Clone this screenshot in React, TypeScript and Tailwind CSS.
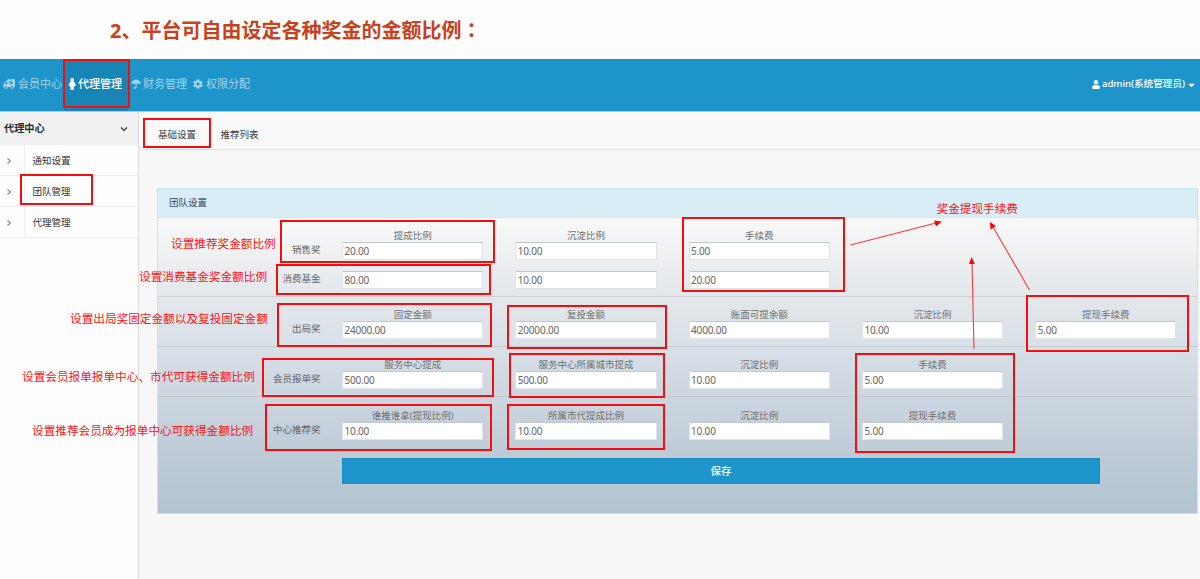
import React from "react";
import { FaAmbulance, FaCaretDown, FaCog, FaUser } from "react-icons/fa";

type Field = { label?: string; value: string };

function FieldRow({ name, fields, className }: { name: string; fields: Field[]; className: string }) {
  return (
    <div className={`flex items-end ${className}`}>
      <div className="mr-[21.5px] flex h-[17.5px] w-[162.5px] shrink-0 items-start justify-end text-[9.5px] leading-[14px] text-[#666]">
        {name}
      </div>
      <div className="flex gap-[32px]">
        {fields.map((f, i) => (
          <div key={i} className="w-[141.3px]">
            {f.label && (
              <div className="h-[13.5px] text-center text-[9.5px] leading-[14px] whitespace-nowrap text-[#707070]">{f.label}</div>
            )}
            <div className="flex h-[18px] items-center border border-[#e0e4e8] border-t-[#c3c8cc] bg-white pl-[1.5px] text-[10px] tracking-[-0.2px] text-[#666]">
              {f.value}
            </div>
          </div>
        ))}
      </div>
    </div>
  );
}

const boxes = [
  "left-[63px] top-[59px] w-[67px] h-[49px]",
  "left-[143px] top-[118px] w-[68px] h-[30px]",
  "left-[20px] top-[174px] w-[73px] h-[31px]",
  "left-[280px] top-[220px] w-[215px] h-[43px]",
  "left-[276px] top-[264px] w-[215px] h-[31px]",
  "left-[682px] top-[217px] w-[163px] h-[75px]",
  "left-[277px] top-[303px] w-[215px] h-[44px]",
  "left-[507px] top-[305px] w-[160px] h-[44px]",
  "left-[1026px] top-[295px] w-[163px] h-[57px]",
  "left-[262px] top-[358px] w-[232px] h-[39px]",
  "left-[509px] top-[353px] w-[156px] h-[45px]",
  "left-[855px] top-[353px] w-[160px] h-[100px]",
  "left-[265px] top-[404px] w-[227px] h-[47px]",
  "left-[507px] top-[404px] w-[158px] h-[46px]",
];

const notes = [
  { text: "设置推荐奖金额比例", pos: "left-[171px] top-[235px]" },
  { text: "设置消费基金奖金额比例", pos: "left-[139px] top-[268px]" },
  { text: "设置出局奖固定金额以及复投固定金额", pos: "left-[70px] top-[310px]" },
  { text: "设置会员报单报单中心、市代可获得金额比例", pos: "left-[22px] top-[368px]" },
  { text: "设置推荐会员成为报单中心可获得金额比例", pos: "left-[32px] top-[422px]" },
  { text: "奖金提现手续费", pos: "left-[936.5px] top-[200px]" },
];

function Chevron({ className, d }: { className: string; d: string }) {
  return (
    <svg className={className} viewBox="0 0 8 8" fill="none" stroke="currentColor" strokeWidth="1.1">
      <path d={d} />
    </svg>
  );
}

export default function App() {
  return (
    <div className="relative flex h-[579px] w-[1200px] flex-col overflow-hidden bg-[#f7f7f7] font-['Noto_Sans','Noto_Sans_CJK_SC',sans-serif] text-[9.5px]">
      <h1 className="h-[59px] shrink-0 bg-[#fdfdfd] pl-[110px] text-[20px] leading-[59px] font-bold text-[#c6421c]">
        2、平台可自由设定各种奖金的金额比例<span className="font-['Noto_Sans_CJK_TC',sans-serif]" lang="zh-TW">：</span>
      </h1>

      <nav className="flex h-[53px] shrink-0 border-b border-[#9fcde4] bg-[#1d94ca] text-[11px] leading-[16px] text-[#a5d4ea]">
        <a className="flex w-[64px] items-center pb-[2px] pl-[3px] whitespace-nowrap">
          <FaAmbulance className="mr-[3px] h-[12px] w-[12px] shrink-0 -scale-x-100" />
          会员中心
        </a>
        <a className="flex w-[64px] items-center bg-[#1785b6] pb-[2px] pl-[4px] font-medium whitespace-nowrap text-white">
          <svg className="mr-[1.5px] h-[12px] w-[8.5px] shrink-0" viewBox="0 0 8.500 12" fill="currentColor">
            <circle cx="4.200" cy="1.900" r="1.800" />
            <path d="M2.300 3.500 H6.100 L7.900 7.200 L7 8.200 L6.300 7.900 L5.900 9 V11.700 H2.500 V9 L2.100 7.900 L1.400 8.200 L0.500 7.200 Z" />
          </svg>
          代理管理
        </a>
        <a className="flex w-[62px] items-center pb-[2px] pl-[3px] whitespace-nowrap">
          <svg className="mr-[2px] h-[10px] w-[10px] shrink-0" viewBox="0 0 10 10">
            <path fill="currentColor" d="M5 0.800 C7.600 0.800 9.600 2.700 10 5 C9.200 4.300 8.200 4.300 7.500 5 C6.700 4.200 5.700 4.200 5 4.900 C4.300 4.200 3.300 4.200 2.500 5 C1.800 4.300 0.800 4.300 0 5 C0.400 2.700 2.400 0.800 5 0.800 Z" />
            <path fill="none" stroke="currentColor" strokeWidth="1.1" d="M5 0 V8.300 C5 9.700 2.900 9.700 2.900 8.200" />
          </svg>
          财务管理
        </a>
        <a className="flex w-[70px] items-center pb-[2px] pl-[3px] whitespace-nowrap">
          <FaCog className="mr-[3px] h-[10px] w-[10px] shrink-0" />
          权限分配
        </a>
        <div className="ml-auto flex items-center pr-[5px] pb-[2px] text-[9.6px] font-medium text-white">
          <FaUser className="mr-[2px] h-[9px] w-[8px]" />
          admin(系统管理员)
          <FaCaretDown className="mt-[1px] ml-[3px] h-[10px] w-[7px]" />
        </div>
      </nav>

      <div className="flex min-h-0 flex-1">
        <aside className="w-[139px] shrink-0 border-r border-[#dcdcdc] bg-[#fdfdfd] text-[#333]">
          <div className="flex h-[33px] items-center justify-between border-b border-[#f0f0f0] bg-[#f1f1f1] pt-[2px] pr-[10px] pl-[4px] text-[10.2px] font-bold text-[#222b35]">
            代理中心
            <Chevron className="h-[8px] w-[8px]" d="M1 2.500 L4 5.500 L7 2.500" />
          </div>
          {["通知设置", "团队管理", "代理管理"].map((t) => (
            <div key={t} className="flex h-[31px] border-b border-[#ededed]">
              <div className="flex w-[25px] items-center border-r border-[#efefef] pt-[1px] pl-[5px] text-[#888]">
                <Chevron className="h-[8px] w-[8px]" d="M2.500 1.500 L5.500 4 L2.500 6.500" />
              </div>
              <div className="flex items-center pt-[2px] pl-[7.5px]">{t}</div>
            </div>
          ))}
        </aside>

        <main className="flex min-w-0 flex-1 flex-col">
          <div className="flex h-[37.5px] shrink-0 items-center gap-[24.5px] border-b border-[#e2e2e2] bg-[#f9f9f9] pt-[9px] pl-[19px] text-[#34404c]">
            <span>基础设置</span>
            <span>推荐列表</span>
          </div>

          <section className="mt-[38.5px] ml-[18px] flex h-[326px] w-[1041px] flex-col border border-[#c5e6ee]">
            <div className="flex h-[29px] shrink-0 items-center border-b border-[#cbeaf1] bg-[#d9edf7] pt-[1px] pl-[11px] text-[#34495a]">
              团队设置
            </div>
            <div className="flex flex-1 flex-col bg-[linear-gradient(to_bottom,#f8f8f8_0%,#e3e7eb_27%,#d7dfe7_45%,#c0ccd8_78%,#b1c4d1_100%)]">
              <div className="h-[79px] shrink-0 border-b border-[#cdd0d3]">
                <FieldRow
                  className="pt-[10.5px]"
                  name="销售奖"
                  fields={[
                    { label: "提成比例", value: "20.00" },
                    { label: "沉淀比例", value: "10.00" },
                    { label: "手续费", value: "5.00" },
                  ]}
                />
                <FieldRow
                  className="pt-[11px]"
                  name="消费基金"
                  fields={[{ value: "80.00" }, { value: "10.00" }, { value: "20.00" }]}
                />
              </div>
              <FieldRow
                className="h-[50px] shrink-0 border-b border-[#cacdd0] pb-[7px]"
                name="出局奖"
                fields={[
                  { label: "固定金额", value: "24000.00" },
                  { label: "复投金额", value: "20000.00" },
                  { label: "账面可提余额", value: "4000.00" },
                  { label: "沉淀比例", value: "10.00" },
                  { label: "提现手续费", value: "5.00" },
                ]}
              />
              <FieldRow
                className="h-[50px] shrink-0 border-b border-[#c8cccf] pb-[7px]"
                name="会员报单奖"
                fields={[
                  { label: "服务中心提成", value: "500.00" },
                  { label: "服务中心所属城市提成", value: "500.00" },
                  { label: "沉淀比例", value: "10.00" },
                  { label: "手续费", value: "5.00" },
                ]}
              />
              <FieldRow
                className="h-[51px] shrink-0 border-b border-[#c1c9d0] pb-[7px]"
                name="中心推荐奖"
                fields={[
                  { label: "谁推谁拿(提现比例)", value: "10.00" },
                  { label: "所属市代提成比例", value: "10.00" },
                  { label: "沉淀比例", value: "10.00" },
                  { label: "提现手续费", value: "5.00" },
                ]}
              />
              <div className="h-[44px] shrink-0 border-b border-[#c2c6c9] pt-[10px] pl-[184px]">
                <button className="flex h-[26px] w-[758px] items-center justify-center border border-[#188bbf] bg-[#1d94ca] pt-[1px] text-[10.5px] font-medium text-white">
                  保存
                </button>
              </div>
            </div>
          </section>
        </main>
      </div>

      {boxes.map((b) => (
        <div key={b} className={`pointer-events-none absolute border-2 border-[#f50d0d] ${b}`} />
      ))}
      {notes.map((n) => (
        <div key={n.text} className={`absolute text-[11.65px] leading-[17px] whitespace-nowrap text-[#fb1414] ${n.pos}`}>
          {n.text}
        </div>
      ))}
      <svg className="pointer-events-none absolute top-0 left-0 h-[579px] w-[1200px]" viewBox="0 0 1200 579">
        <g stroke="#f83a3a" strokeWidth="1.1" fill="none">
          <path d="M850.500 245 L936 223" />
          <path d="M1029.500 290 L993 227" />
          <path d="M974 349 L972 262" />
        </g>
        <g fill="#f80808">
          <path d="M942 221.500 L934 220.500 L936 226.500 Z" />
          <path d="M990 222 L990.500 229.500 L996 226 Z" />
          <path d="M971.500 257 L969 264 L975 264 Z" />
        </g>
      </svg>
    </div>
  );
}
